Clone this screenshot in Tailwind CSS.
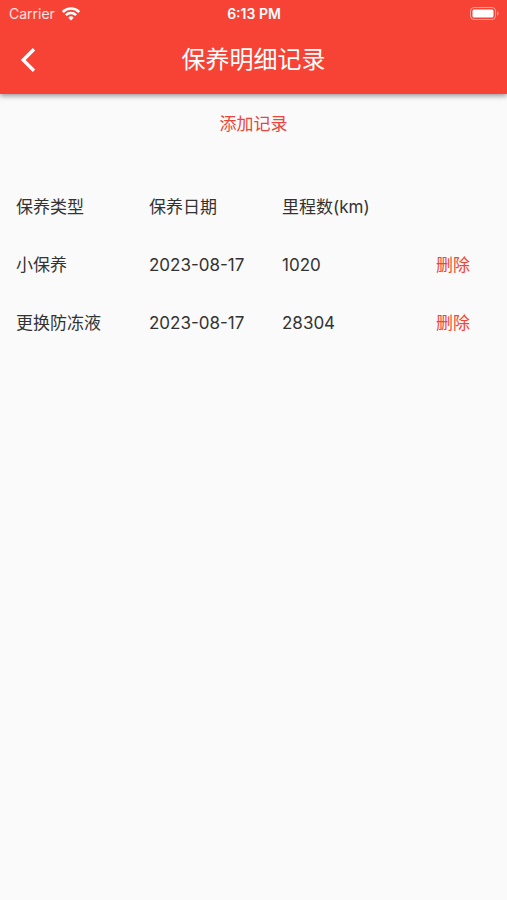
<!DOCTYPE html>
<html lang="zh-CN">
<head>
    <meta charset="UTF-8">
    <meta name="viewport" content="width=device-width, initial-scale=1.0">
    <title>保养明细记录</title>
    <script src="https://cdn.jsdelivr.net/npm/@tailwindcss/browser@4"></script>
</head>
<body class="min-h-screen bg-[#fafafa] font-['Inter','Noto_Sans_CJK_SC',sans-serif] text-[17px] leading-6 text-[#333333]">
    <header class="bg-[#f64336] text-white shadow-[0_2px_5px_rgba(0,0,0,0.4)]">
        <!-- Status bar -->
        <div class="grid grid-cols-3 items-center h-7 pl-[9px] pr-2 text-sm">
            <div class="flex items-center gap-[7px] text-white/85">
                <span>Carrier</span>
                <svg class="w-[18px] h-[14px] text-white" viewBox="0 0 18 14" fill="none" stroke="currentColor" stroke-width="2.5" aria-hidden="true">
                    <path d="M0.8 5a11.6 11.6 0 0 1 16.4 0"/>
                    <path d="M3.9 8.2a7.2 7.2 0 0 1 10.2 0"/>
                    <path d="M9 13.4 6.300 10.700a3.800 3.800 0 0 1 5.400 0z" fill="currentColor" stroke="none"/>
                </svg>
            </div>
            <span class="text-center font-semibold">6:13 PM</span>
            <svg class="justify-self-end w-[29px] h-[14px]" viewBox="0 0 29 14" fill="none" aria-hidden="true">
                <rect x="0.5" y="0.5" width="25" height="12" rx="3.5" stroke="#fff" stroke-opacity="0.5"/>
                <rect x="2.5" y="2.500" width="21" height="8" rx="1.5" fill="#fff"/>
                <path d="M27 4.5v4c1-.3 1.6-1.1 1.6-2s-.6-1.7-1.6-2z" fill="#fff" fill-opacity="0.5"/>
            </svg>
        </div>

        <!-- Title bar -->
        <div class="grid grid-cols-[56px_1fr_56px] items-center h-[66px] pb-[2px]">
            <button type="button" aria-label="返回" class="flex items-center justify-center h-14">
                <svg class="w-6 h-6" viewBox="0 0 24 24" fill="none" stroke="currentColor" stroke-width="3.4" aria-hidden="true">
                    <path d="M18 1.2 7.2 12 18 22.8"/>
                </svg>
            </button>
            <h1 class="text-center text-2xl">保养明细记录</h1>
        </div>
    </header>

    <main>
        <div class="flex justify-center h-[84px] pt-[18px]">
            <button type="button" class="self-start px-4 text-[#e9453c]">添加记录</button>
        </div>

        <!-- Maintenance records -->
        <table class="w-full table-fixed text-left">
            <thead>
                <tr class="h-[58px]">
                    <th class="w-[133px] pl-4 font-normal">保养类型</th>
                    <th class="w-[133px] pl-4 font-normal">保养日期</th>
                    <th class="w-[133px] pl-4 font-normal">里程数(km)</th>
                    <td></td>
                </tr>
            </thead>
            <tbody>
                <tr class="h-[58px]">
                    <td class="pl-4">小保养</td>
                    <td class="pl-4 whitespace-nowrap">2023-08-17</td>
                    <td class="pl-4">1020</td>
                    <td class="text-center"><button type="button" class="text-[#f64336]">删除</button></td>
                </tr>
                <tr class="h-[58px]">
                    <td class="pl-4">更换防冻液</td>
                    <td class="pl-4 whitespace-nowrap">2023-08-17</td>
                    <td class="pl-4">28304</td>
                    <td class="text-center"><button type="button" class="text-[#f64336]">删除</button></td>
                </tr>
            </tbody>
        </table>
    </main>
</body>
</html>
